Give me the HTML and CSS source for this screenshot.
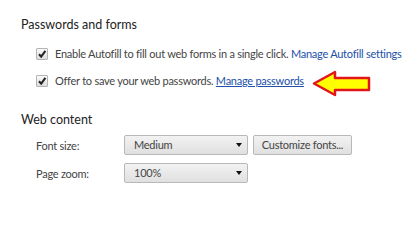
FILE: index.html
```html
<!DOCTYPE html>
<html>
<head>
<meta charset="utf-8">
<link rel="stylesheet" href="styles.css">
</head>
<body>
<div class="page">
  <section class="section first">
    <h3 class="heading">Passwords and forms</h3>
    <div class="rows">
      <div class="check-row">
        <span class="checkbox"><svg viewBox="0 0 10 10" width="10" height="10"><path d="M2 5.2 L4.2 7.6 L8.4 1.8" fill="none" stroke="#222" stroke-width="2"/></svg></span>
        <span class="label">Enable Autofill to fill out web forms in a single click. <a class="link">Manage Autofill settings</a></span>
      </div>
      <div class="check-row">
        <span class="checkbox"><svg viewBox="0 0 10 10" width="10" height="10"><path d="M2 5.2 L4.2 7.6 L8.4 1.8" fill="none" stroke="#222" stroke-width="2"/></svg></span>
        <span class="label">Offer to save your web passwords. <a class="link underline">Manage passwords</a></span>
      </div>
    </div>
  </section>
  <section class="section second">
    <h3 class="heading">Web content</h3>
    <div class="rows form">
      <div class="form-row">
        <span class="form-label">Font size:</span>
        <span class="select">Medium<i class="caret"></i></span>
        <span class="button">Customize fonts...</span>
      </div>
      <div class="form-row">
        <span class="form-label">Page zoom:</span>
        <span class="select">100%<i class="caret"></i></span>
      </div>
    </div>
  </section>
  <svg class="arrow" width="60" height="28" viewBox="0 0 60 28">
    <polygon points="2,13.5 23,2 23,8 57,8 57,20 23,20 23,25" fill="#ffff00" stroke="#e3141b" stroke-width="2.5" stroke-linejoin="round"/>
  </svg>
</div>
</body>
</html>
```
FILE: styles.css
```css
html, body {
  margin: 0;
  padding: 0;
  background: #ffffff;
}
.page {
  position: relative;
  width: 415px;
  height: 222px;
  overflow: hidden;
  font-family: Lato, "Open Sans", sans-serif;
  font-size: 11px;
  letter-spacing: -0.25px;
  color: #444;
}
.section {
  padding-left: 21px;
}
.section.first {
  padding-top: 16px;
}
.section.second {
  padding-top: 20px;
}
.heading {
  margin: 0;
  font-weight: normal;
  font-size: 12.5px;
  letter-spacing: 0;
  line-height: 18px;
  color: #222;
}
.rows {
  padding-left: 15px;
}
.section.first .rows {
  padding-top: 10px;
  display: flex;
  flex-direction: column;
  gap: 7px;
}
.check-row {
  display: flex;
  align-items: center;
  height: 20px;
}
.checkbox {
  width: 10px;
  height: 10px;
  border: 1px solid #b4b4b4;
  border-radius: 1px;
  background: linear-gradient(#fafafa, #dedede);
  display: flex;
  align-items: center;
  justify-content: center;
  margin-right: 7px;
  box-sizing: content-box;
}
.checkbox svg {
  display: block;
}
.label {
  white-space: nowrap;
  line-height: 20px;
}
.link {
  color: #2050a8;
}
.link.underline {
  text-decoration: underline;
}
.form {
  padding-top: 6px;
  display: flex;
  flex-direction: column;
  gap: 8px;
}
.form-row {
  display: flex;
  align-items: center;
  height: 20px;
}
.form-label {
  width: 88px;
}
.select {
  position: relative;
  box-sizing: border-box;
  width: 124px;
  height: 20px;
  border: 1px solid #b8b8b8;
  border-radius: 2px;
  background: linear-gradient(#f2f2f2, #e0e0e0);
  padding-left: 9px;
  line-height: 18px;
  color: #444;
}
.caret {
  position: absolute;
  right: 5px;
  top: 7px;
  width: 0;
  height: 0;
  border-left: 3.5px solid transparent;
  border-right: 3.5px solid transparent;
  border-top: 4px solid #111;
}
.button {
  box-sizing: border-box;
  margin-left: 5px;
  width: 99px;
  height: 20px;
  border: 1px solid #b8b8b8;
  border-radius: 2px;
  background: linear-gradient(#f2f2f2, #e0e0e0);
  text-align: center;
  line-height: 18px;
  color: #444;
}
.arrow {
  position: absolute;
  left: 312px;
  top: 70px;
}
```
